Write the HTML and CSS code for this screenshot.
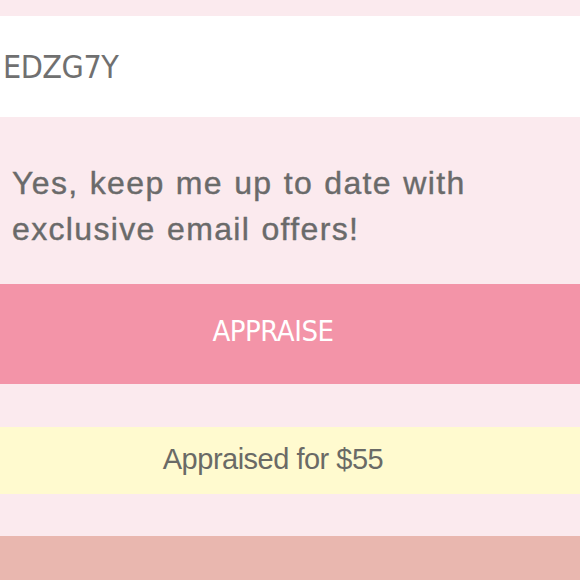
FILE: index.html
```html
<!DOCTYPE html>
<html>
<head>
<meta charset="utf-8">
<link rel="stylesheet" href="styles.css">
</head>
<body>
<div class="page">
  <div class="gap-top"></div>
  <div class="code-field"><span class="code">EDZG7Y</span></div>
  <div class="optin">
    <p class="optin-text">Yes, keep me up to date with exclusive email offers!</p>
  </div>
  <button class="appraise">APPRAISE</button>
  <div class="spacer-a"></div>
  <div class="result">Appraised for $55</div>
  <div class="spacer-b"></div>
  <div class="footer-band"></div>
</div>
</body>
</html>
```
FILE: styles.css
```css
html, body {
  margin: 0;
  padding: 0;
  background: #fbeaee;
}
.page {
  width: 580px;
  height: 580px;
  overflow: hidden;
  display: flex;
  flex-direction: column;
  font-family: "Liberation Sans", Arial, sans-serif;
  color: #6e6e6e;
}
.gap-top {
  height: 16px;
  flex: none;
}
.code-field {
  height: 101px;
  flex: none;
  background: #ffffff;
  display: flex;
  align-items: center;
  padding-left: 3px;
  box-sizing: border-box;
}
.code {
  font-family: "DejaVu Sans Condensed", sans-serif;
  font-size: 32px;
  letter-spacing: -0.5px;
  color: #707070;
}
.optin {
  height: 167px;
  flex: none;
  box-sizing: border-box;
  padding: 43px 12px 0 12px;
}
.optin-text {
  margin: 0;
  font-size: 32px;
  line-height: 46px;
  letter-spacing: 1.35px;
  word-spacing: 1px;
  color: #6a6a6a;
  -webkit-text-stroke: 0.4px #6a6a6a;
  width: 480px;
}
.appraise {
  height: 100px;
  flex: none;
  border: none;
  margin: 0;
  padding: 0 34px 6px 0;
  background: #f394a8;
  color: #ffffff;
  font-family: "DejaVu Sans Condensed", sans-serif;
  font-size: 29px;
  letter-spacing: -0.45px;
  width: 580px;
}
.spacer-a {
  height: 43px;
  flex: none;
}
.result {
  height: 67px;
  flex: none;
  background: #fffacf;
  display: flex;
  align-items: center;
  justify-content: center;
  font-size: 29px;
  letter-spacing: -0.5px;
  color: #6a6a66;
  padding: 0 34px 2px 0;
  box-sizing: border-box;
}
.spacer-b {
  height: 42px;
  flex: none;
}
.footer-band {
  flex: 1;
  background: #e9b7af;
}
```
